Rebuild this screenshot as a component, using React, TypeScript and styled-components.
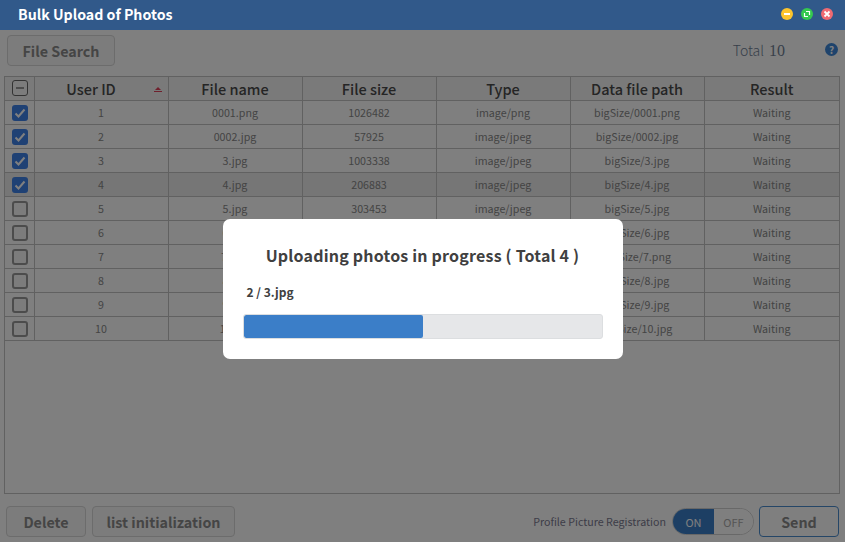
import styled, { createGlobalStyle } from "styled-components";

const GlobalStyle = createGlobalStyle`
  html, body {
    margin: 0;
    height: 100%;
    overflow: hidden;
    background: #fff;
    font-family: "Noto Sans CJK KR", "Noto Sans", sans-serif;
  }
  * { box-sizing: border-box; }
`;

const Page = styled.div`
  display: flex;
  flex-direction: column;
  height: 100vh;
`;

const TitleBar = styled.header`
  display: flex;
  align-items: center;
  justify-content: space-between;
  flex: none;
  height: 30px;
  padding: 0 12px 0 18px;
  background: #31598a;
`;

const Title = styled.h1`
  margin: 0 0 2px;
  font-size: 14.2px;
  font-weight: 700;
  color: #fff;
`;

const WindowControls = styled.div`
  display: flex;
  gap: 8px;
  margin-bottom: 2px;
`;

const WindowButton = styled.span<{ $color: string }>`
  display: flex;
  align-items: center;
  justify-content: center;
  width: 12px;
  height: 12px;
  border-radius: 50%;
  background: ${(p) => p.$color};
`;

const Toolbar = styled.div`
  display: flex;
  align-items: center;
  justify-content: space-between;
  flex: none;
  height: 46px;
  padding: 0 7px 5px;
`;

const Button = styled.button<{ $width: number; $primary?: boolean }>`
  width: ${(p) => p.$width}px;
  height: 31px;
  padding: 0 0 1px;
  border: 1px solid ${(p) => (p.$primary ? "#4a8ccf" : "#d8d8d8")};
  border-radius: 4px;
  background: ${(p) => (p.$primary ? "#fff" : "#f8f8f8")};
  color: #8a8a8a;
  font-family: inherit;
  font-size: 14.3px;
  font-weight: 700;
`;

const Summary = styled.div`
  display: flex;
  align-items: center;
  gap: 40px;
  margin-bottom: 2px;
`;

const Total = styled.span`
  display: flex;
  align-items: baseline;
  gap: 5px;
  font-size: 14px;
  font-weight: 300;
  color: #6f7f95;
`;

const Count = styled.span`
  font-family: "Liberation Serif", serif;
  font-size: 16px;
`;

const HelpIcon = styled.span`
  display: flex;
  align-items: center;
  justify-content: center;
  width: 13px;
  height: 13px;
  border-radius: 50%;
  background: #3c87d8;
  color: #fff;
  font-size: 10px;
  font-weight: 700;
`;

const TableBox = styled.div`
  flex: 1;
  margin: 0 5px 0 4px;
  border: 1px solid #c2c2c2;
  min-height: 0;
`;

const Table = styled.table`
  width: 100%;
  table-layout: fixed;
  border-collapse: collapse;
`;

const HeadCell = styled.th<{ $width?: number; $shift?: number }>`
  position: relative;
  width: ${(p) => (p.$width ? `${p.$width}px` : "auto")};
  height: 23px;
  padding: 0 ${(p) => p.$shift ?? 0}px 0 0;
  border: 1px solid #c2c2c2;
  border-top: 0;
  background: #f4f4f4;
  color: #4a4a4a;
  font-size: 14.5px;
  font-weight: 500;
  &:first-child { border-left: 0; padding-left: 1px; }
  &:last-child { border-right: 0; }
`;

const Row = styled.tr<{ $active?: boolean }>`
  background: ${(p) => (p.$active ? "#ececec" : "#fff")};
`;

const Cell = styled.td`
  height: 24px;
  padding: 1px 0 0;
  border: 1px solid #c2c2c2;
  color: #888;
  font-size: 10.7px;
  text-align: center;
  white-space: nowrap;
  &:first-child { border-left: 0; padding-left: 1px; }
  &:last-child { border-right: 0; }
`;

const CheckBox = styled.span<{ $checked?: boolean; $dark?: boolean }>`
  display: flex;
  align-items: center;
  justify-content: center;
  width: 16px;
  height: 16px;
  margin: 0 auto;
  border-radius: 3px;
  border: ${(p) => (p.$checked ? "0" : `${p.$dark ? 1 : 2}px solid ${p.$dark ? "#666" : "#999"}`)};
  background: ${(p) => (p.$checked ? "#3f82e8" : "#f8f8f8")};
`;

const SortMark = styled.svg`
  position: absolute;
  top: 10px;
  right: 6px;
`;

const Footer = styled.footer`
  display: flex;
  align-items: center;
  justify-content: space-between;
  flex: none;
  height: 48px;
  padding: 7px 6px 0;
`;

const FooterGroup = styled.div`
  display: flex;
  align-items: center;
  gap: 6px;
`;

const RegisterLabel = styled.span`
  font-size: 10.7px;
  color: #7a7a90;
`;

const Toggle = styled.div`
  display: flex;
  width: 82px;
  height: 27px;
  margin-right: -1px;
  border: 1px solid #d0d0d0;
  border-radius: 14px;
  overflow: hidden;
  font-size: 11px;
`;

const ToggleSide = styled.span<{ $on?: boolean }>`
  display: flex;
  align-items: center;
  justify-content: center;
  flex: ${(p) => (p.$on ? "0 0 41px" : "1")};
  background: ${(p) => (p.$on ? "#3a7fc8" : "#fff")};
  color: ${(p) => (p.$on ? "#fff" : "#aaa")};
`;

const Overlay = styled.div`
  position: fixed;
  top: 30px;
  left: 0;
  right: 0;
  bottom: 0;
  display: flex;
  align-items: center;
  justify-content: center;
  padding-top: 6px;
  background: rgba(0, 0, 0, 0.5);
`;

const Modal = styled.div`
  width: 400px;
  height: 140px;
  padding: 23px 20px 0;
  border-radius: 7px;
  background: #fff;
`;

const ModalTitle = styled.h2`
  margin: 0;
  font-size: 16px;
  line-height: 26px;
  font-weight: 700;
  letter-spacing: 0.2px;
  text-align: center;
  color: #404040;
`;

const FileLabel = styled.div`
  margin: 15px 0 13px 4px;
  font-size: 12px;
  line-height: 18px;
  font-weight: 700;
  color: #404040;
`;

const ProgressTrack = styled.div`
  height: 25px;
  border: 1px solid #dcdee0;
  border-radius: 3px;
  background: #e6e7e9;
  overflow: hidden;
`;

const ProgressFill = styled.div`
  height: 100%;
  border-radius: 2px;
  background: #3b7ec8;
`;

// size and type of rows 6-10 sit behind the dialog in the reference
const rows = [
  { id: 1, name: "0001.png", size: "1026482", type: "image/png", path: "bigSize/0001.png", checked: true },
  { id: 2, name: "0002.jpg", size: "57925", type: "image/jpeg", path: "bigSize/0002.jpg", checked: true },
  { id: 3, name: "3.jpg", size: "1003338", type: "image/jpeg", path: "bigSize/3.jpg", checked: true },
  { id: 4, name: "4.jpg", size: "206883", type: "image/jpeg", path: "bigSize/4.jpg", checked: true },
  { id: 5, name: "5.jpg", size: "303453", type: "image/jpeg", path: "bigSize/5.jpg", checked: false },
  { id: 6, name: "6.jpg", size: "", type: "", path: "bigSize/6.jpg", checked: false },
  { id: 7, name: "7.png", size: "", type: "", path: "bigSize/7.png", checked: false },
  { id: 8, name: "8.jpg", size: "", type: "", path: "bigSize/8.jpg", checked: false },
  { id: 9, name: "9.jpg", size: "", type: "", path: "bigSize/9.jpg", checked: false },
  { id: 10, name: "10.jpg", size: "", type: "", path: "bigSize/10.jpg", checked: false },
];

function CheckMark() {
  return (
    <svg width="12" height="12" viewBox="0 0 12 12" fill="none">
      <path d="M1.5 6.5 L4.5 9.5 L10.5 2.5" stroke="#fff" strokeWidth="2" />
    </svg>
  );
}

function App() {
  return (
    <Page>
      <GlobalStyle />
      <TitleBar>
        <Title>Bulk Upload of Photos</Title>
        <WindowControls>
          <WindowButton $color="#fcc42d">
            <svg width="8" height="8" viewBox="0 0 8 8">
              <rect x="1" y="3" width="6" height="2" fill="#fff" />
            </svg>
          </WindowButton>
          <WindowButton $color="#35c94f">
            <svg width="8" height="8" viewBox="0 0 8 8" fill="none" stroke="#fff" strokeWidth="1.2">
              <path d="M3 1.5 H6.5 V5 M5 6.5 H1.5 V3" />
            </svg>
          </WindowButton>
          <WindowButton $color="#ef6a72">
            <svg width="8" height="8" viewBox="0 0 8 8" stroke="#fff" strokeWidth="1.8">
              <path d="M1.5 1.5 L6.5 6.5 M6.5 1.5 L1.5 6.5" />
            </svg>
          </WindowButton>
        </WindowControls>
      </TitleBar>

      <Toolbar>
        <Button $width={108}>File Search</Button>
        <Summary>
          <Total>
            Total <Count>10</Count>
          </Total>
          <HelpIcon>?</HelpIcon>
        </Summary>
      </Toolbar>

      <TableBox>
        <Table>
          <thead>
            <tr>
              <HeadCell $width={29}>
                <CheckBox $dark>
                  <svg width="8" height="2" viewBox="0 0 8 2">
                    <rect width="8" height="2" fill="#999" />
                  </svg>
                </CheckBox>
              </HeadCell>
              <HeadCell $width={134} $shift={20}>
                User ID
                <SortMark width="8" height="5" viewBox="0 0 8 5">
                  <path d="M4 0 L7 3 H1 Z" fill="#e0405a" />
                  <rect y="4" width="8" height="1" fill="#e0405a" />
                </SortMark>
              </HeadCell>
              <HeadCell $width={134}>File name</HeadCell>
              <HeadCell $width={134}>File size</HeadCell>
              <HeadCell $width={134}>Type</HeadCell>
              <HeadCell $width={134}>Data file path</HeadCell>
              <HeadCell>Result</HeadCell>
            </tr>
          </thead>
          <tbody>
            {rows.map((row) => (
              <Row key={row.id} $active={row.id === 4}>
                <Cell>
                  <CheckBox $checked={row.checked}>{row.checked && <CheckMark />}</CheckBox>
                </Cell>
                <Cell>{row.id}</Cell>
                <Cell>{row.name}</Cell>
                <Cell>{row.size}</Cell>
                <Cell>{row.type}</Cell>
                <Cell>{row.path}</Cell>
                <Cell>Waiting</Cell>
              </Row>
            ))}
          </tbody>
        </Table>
      </TableBox>

      <Footer>
        <FooterGroup>
          <Button $width={80}>Delete</Button>
          <Button $width={143}>list initialization</Button>
        </FooterGroup>
        <FooterGroup>
          <RegisterLabel>Profile Picture Registration</RegisterLabel>
          <Toggle>
            <ToggleSide $on>ON</ToggleSide>
            <ToggleSide>OFF</ToggleSide>
          </Toggle>
          <Button $width={80} $primary>
            Send
          </Button>
        </FooterGroup>
      </Footer>

      <Overlay>
        <Modal>
          <ModalTitle>Uploading photos in progress ( Total 4 )</ModalTitle>
          <FileLabel>2 / 3.jpg</FileLabel>
          <ProgressTrack>
            <ProgressFill style={{ width: `${(2 / 4) * 100}%` }} />
          </ProgressTrack>
        </Modal>
      </Overlay>
    </Page>
  );
}

export default App;
